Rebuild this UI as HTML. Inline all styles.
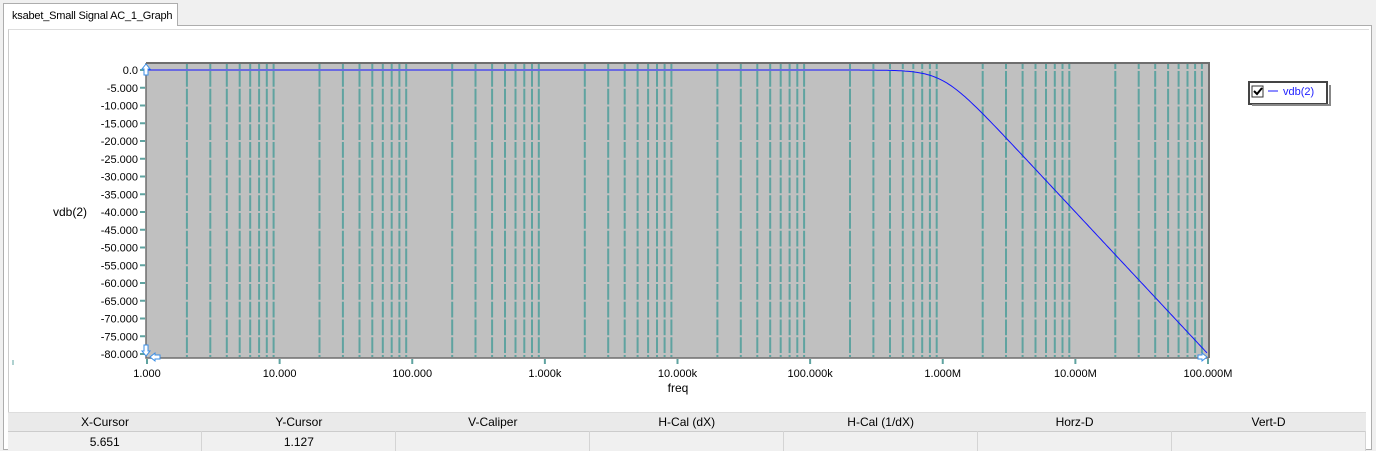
<!DOCTYPE html><html><head><style>
body{margin:0;width:1376px;height:450px;background:#f0f0f0;font-family:"Liberation Sans",sans-serif;overflow:hidden;position:relative}
.tab{position:absolute;left:3px;top:3px;width:175px;height:23px;background:#fff;border:1px solid #adadad;border-bottom:none;font-size:11px;line-height:24px;padding-left:8px;box-sizing:border-box;z-index:2;white-space:nowrap;letter-spacing:-0.2px}
.panel{position:absolute;left:3px;top:25px;width:1369px;height:425px;background:#fff;border:1px solid #adadad;box-sizing:border-box}
.inner{position:absolute;left:8px;top:29px;width:1360px;height:383px;background:#fff;border-left:1px solid #ccc;border-top:1px solid #ddd}
table{position:absolute;left:8px;top:412px;width:1358px;border-collapse:collapse;font-size:12px;table-layout:fixed}
td{text-align:center;height:18px;padding:0;color:#000}
tr.h td{background:#eaeaea;border-top:1px solid #ddd}
tr.v td{background:#f0f0f0;border-top:1px solid #ccc;border-right:1px solid #d4d4d4;height:19px}
svg{position:absolute;left:0;top:0}
</style></head><body>
<div class="panel"></div>
<div class="tab">ksabet_Small Signal AC_1_Graph</div>
<div class="inner"></div>
<svg width="1376" height="412" id="s" font-family="Liberation Sans" font-size="11"></svg>
<table><tr class="h"><td>X-Cursor</td><td>Y-Cursor</td><td>V-Caliper</td><td>H-Cal (dX)</td><td>H-Cal (1/dX)</td><td>Horz-D</td><td>Vert-D</td></tr>
<tr class="v"><td>5.651</td><td>1.127</td><td></td><td></td><td></td><td></td><td></td></tr></table>
<script>
var s='',x0=147,x1=1208,y0=70,y1=354,dec=(x1-x0)/8,st=(y1-y0)/16;
s+='<rect x="146" y="63" width="1063" height="295" fill="#c0c0c0"/>';
for(var d=0;d<8;d++)for(var k=2;k<=9;k++){var x=x0+dec*(d+Math.log10(k));
s+='<line x1="'+x.toFixed(1)+'" y1="'+(y0+1)+'" x2="'+x.toFixed(1)+'" y2="'+(y1+3)+'" stroke="#5fa3a0" stroke-width="2" stroke-dasharray="'+(st-2).toFixed(2)+' 2"/>';
s+='<line x1="'+x.toFixed(1)+'" y1="64" x2="'+x.toFixed(1)+'" y2="'+(y0-1)+'" stroke="#5fa3a0" stroke-width="2"/>';}
for(var i=0;i<=16;i++){var y=y0+i*st;
s+='<line x1="140" y1="'+y+'" x2="145" y2="'+y+'" stroke="#5fa3a0" stroke-width="2"/>';
var t=i==0?'0.0':'-'+(i*5)+'.000';
s+='<text x="138" y="'+(y+4)+'" text-anchor="end">'+t+'</text>';}
s+='<path d="M146 63H1209V358" fill="none" stroke="#6e6e6e" stroke-width="2"/><path d="M146 63V358H1209" fill="none" stroke="#6e6e6e" stroke-width="1.5"/>';
var lab=['1.000','10.000','100.000','1.000k','10.000k','100.000k','1.000M','10.000M','100.000M'];
for(var d=0;d<=8;d++){var x=x0+dec*d;s+='<line x1="'+x+'" y1="359" x2="'+x+'" y2="364" stroke="#5fa3a0" stroke-width="2"/><text x="'+x+'" y="377" text-anchor="middle">'+lab[d]+'</text>';}
var p='';for(var x=x0;x<=x1;x+=2){var f=Math.pow(10,(x-x0)/dec);var db=-10*Math.log10(1+Math.pow(f/1.0e6,4));var y=y0-db*(y1-y0)/80;if(y>y1)y=y1;p+=(p?'L':'M')+x.toFixed(1)+' '+y.toFixed(1);}
s+='<path d="'+p+'" fill="none" stroke="#1414ff" stroke-width="1"/>';
s+='<text x="678" y="392" text-anchor="middle" font-size="12">freq</text>';
s+='<text x="70" y="216" text-anchor="middle" font-size="12">vdb(2)</text>';
s+='<line x1="13" y1="360" x2="13" y2="365" stroke="#5fa3a0" stroke-width="1"/>';
s+='<path d="M146 64l-4 5h2v6h4v-6h2z" fill="#fff" stroke="#3a8ee6"/><path d="M146 356l-4 -5h2v-6h4v6h2z" fill="#fff" stroke="#3a8ee6"/><path d="M150 357l5 -4v2h5v4h-5v2z" fill="#fff" stroke="#3a8ee6"/><path d="M1207 357l-5 -4v2h-4v4h4v2z" fill="#fff" stroke="#3a8ee6"/>';
s+='<rect x="1249" y="82" width="78" height="22" fill="#fff" stroke="#444" stroke-width="2"/><rect x="1329" y="85" width="2" height="21" fill="#888"/><rect x="1252" y="104" width="79" height="2" fill="#888"/>';
s+='<rect x="1252" y="86" width="11" height="11" fill="#fff" stroke="#333"/><path d="M1254 91l3 3 5-6" fill="none" stroke="#000" stroke-width="2"/>';
s+='<line x1="1268" y1="91" x2="1278" y2="91" stroke="#6666ff" stroke-width="1.5"/><text x="1283" y="95" fill="#2222ff">vdb(2)</text>';
document.getElementById('s').innerHTML=s;
</script>
</body></html>
